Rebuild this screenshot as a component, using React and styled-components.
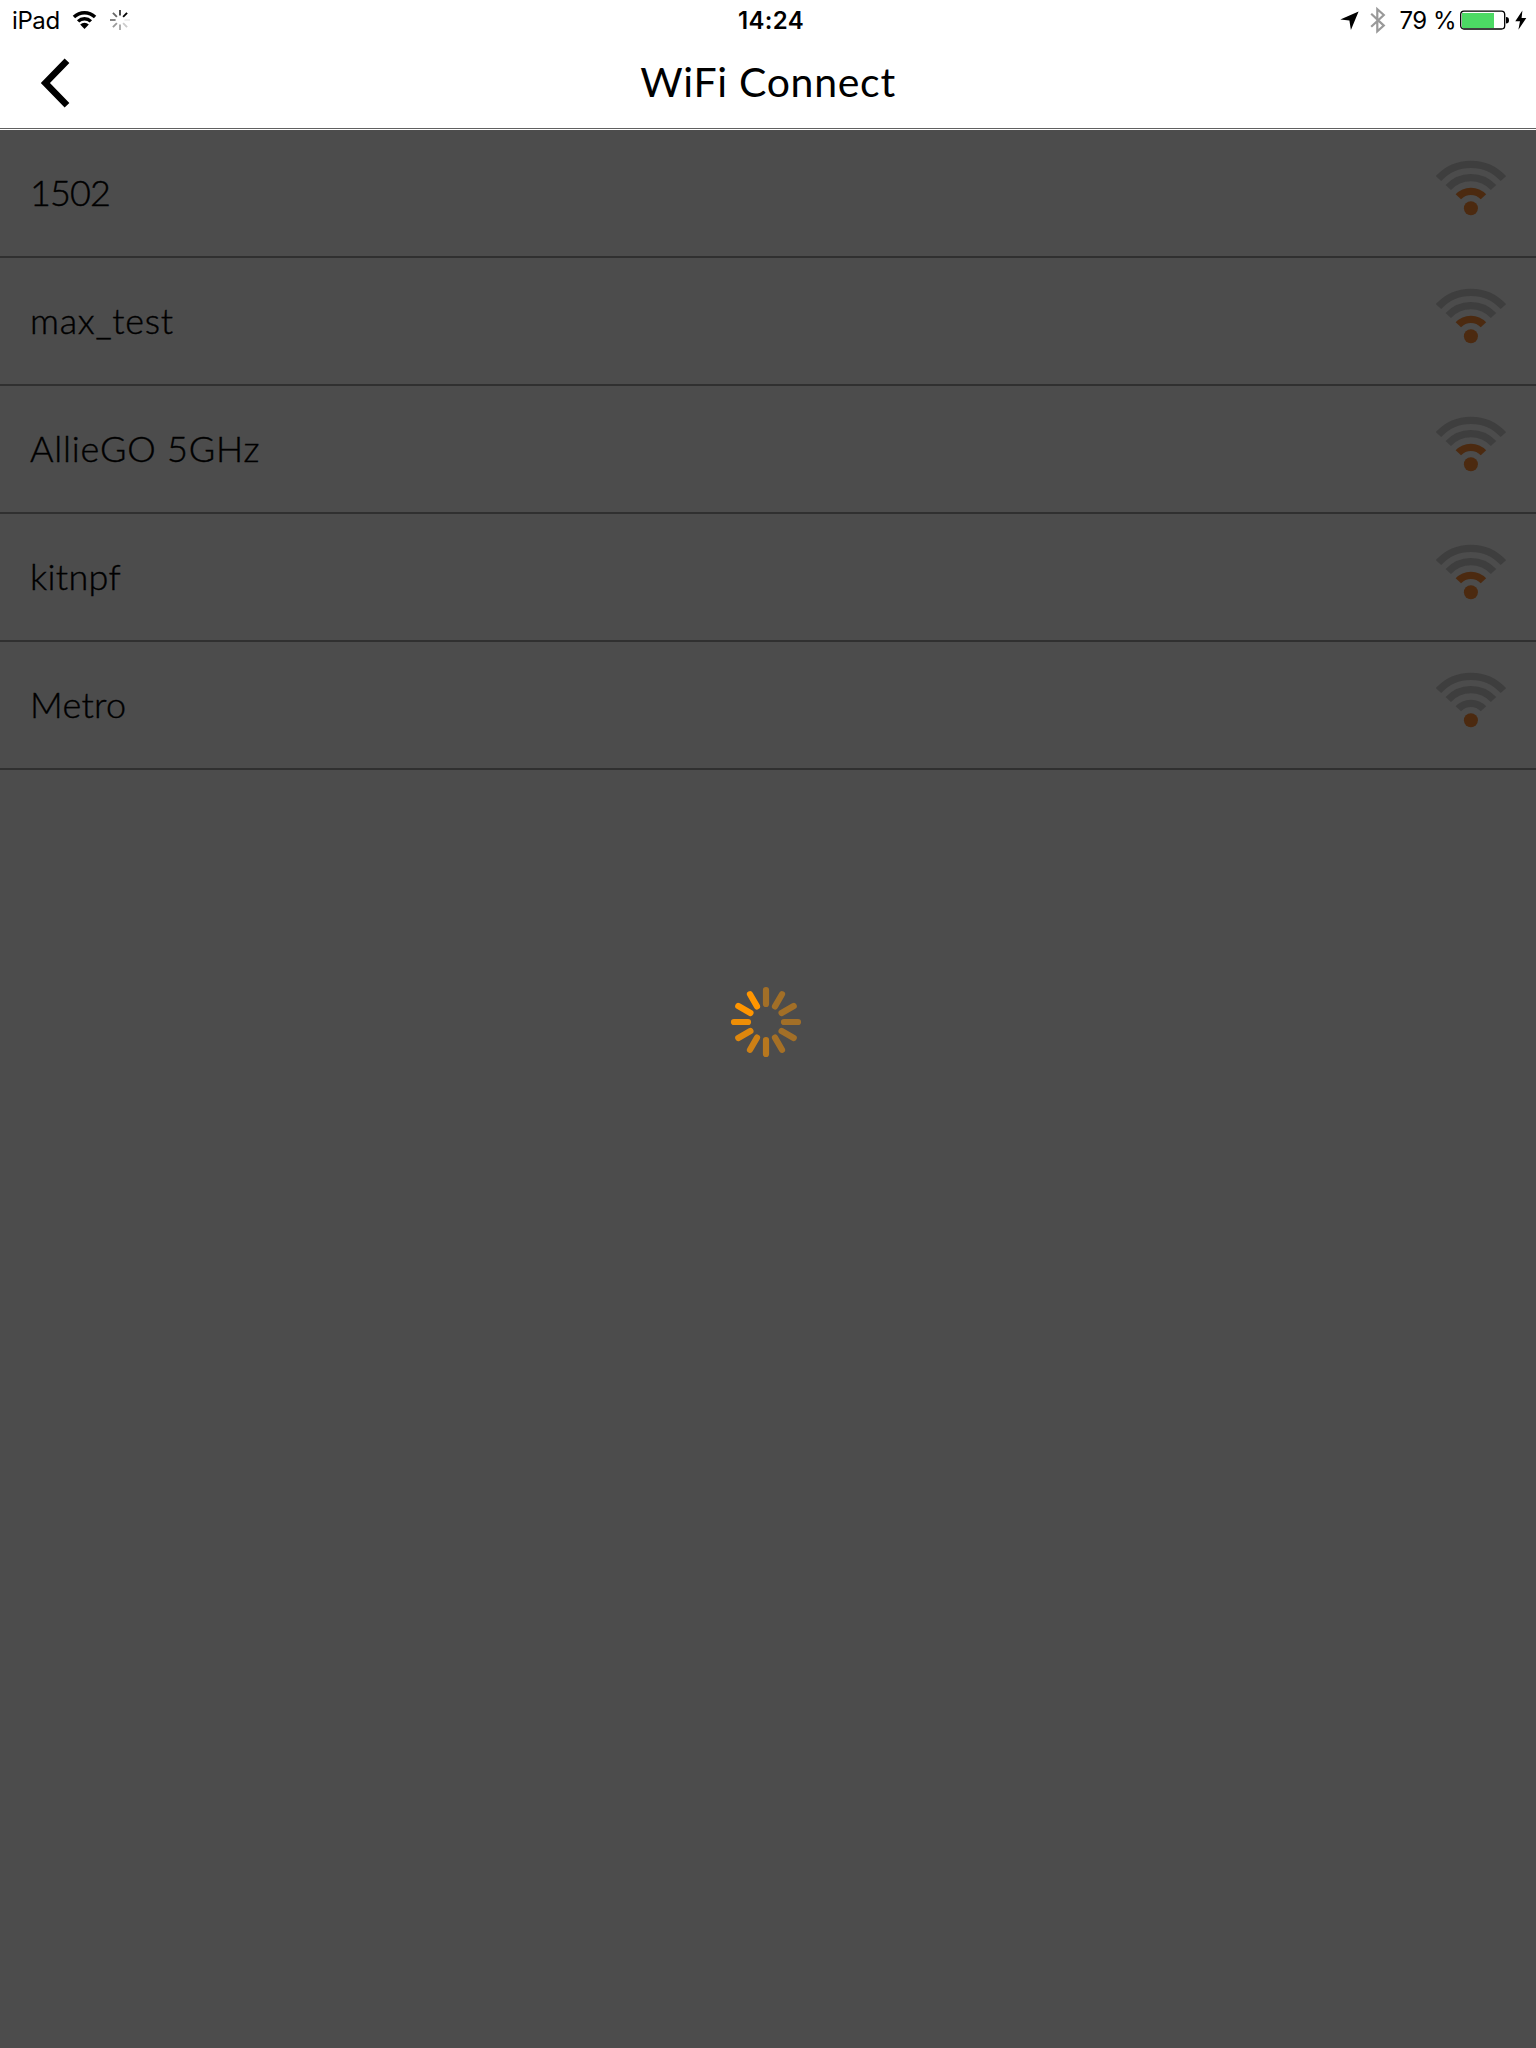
import React from "react";
import styled, { createGlobalStyle } from "styled-components";

const GlobalStyle = createGlobalStyle`
  *, *::before, *::after { box-sizing: border-box; }
  html, body { margin: 0; padding: 0; background: #4c4c4c; }
`;

const Screen = styled.div`
  position: relative;
  display: flex;
  flex-direction: column;
  width: 1536px;
  height: 2048px;
  overflow: hidden;
  background: #4c4c4c;
  color: #000;
  font-family: Lato, "Open Sans", sans-serif;
`;

const StatusBar = styled.div`
  display: grid;
  grid-template-columns: 1fr auto 1fr;
  align-items: center;
  height: 40px;
  padding: 0 9px 0 12px;
  background: #fff;
  font-family: Inter, Roboto, sans-serif;
  font-size: 24px;
  line-height: 36px;
`;

const StatusGroup = styled.div`
  display: flex;
  align-items: center;
  justify-content: ${(p) => (p.$end ? "flex-end" : "flex-start")};
  height: 40px;
`;

const StatusText = styled.span`
  padding-top: 2px;
  font-weight: ${(p) => p.$weight || 400};
  letter-spacing: ${(p) => p.$spacing || 0}px;
  margin-left: ${(p) => p.$lead || 0}px;
  margin-right: ${(p) => p.$gap || 0}px;
  white-space: nowrap;
`;

const StatusIcon = styled.svg`
  display: block;
  flex: none;
  margin-right: ${(p) => p.$gap || 0}px;
`;

const NavBar = styled.header`
  display: grid;
  grid-template-columns: 1fr auto 1fr;
  align-items: center;
  height: 90px;
  padding: 0 0 6px 40px;
  background: #fff;
  box-shadow: inset 0 -1px 0 #fff, inset 0 -2px 0 #606060;
`;

const BackButton = styled.button`
  display: block;
  width: 32px;
  height: 52px;
  margin-top: 2px;
  padding: 0;
  border: 0;
  background: none;
`;

const Title = styled.h1`
  margin: 0 20px 0 -20px;
  font-size: 41px;
  font-weight: 400;
  line-height: 50px;
  letter-spacing: 0.7px;
  white-space: nowrap;
`;

const NetworkList = styled.ul`
  margin: 0;
  padding: 0;
  list-style: none;
`;

const NetworkRow = styled.li`
  display: flex;
  align-items: center;
  justify-content: space-between;
  height: 128px;
  padding: 0 30px;
  border-bottom: 2px solid #303030;
`;

const NetworkName = styled.span`
  padding-bottom: 2px;
  font-size: 36px;
  font-weight: 300;
  line-height: 44px;
  letter-spacing: ${(p) => p.$spacing}px;
  -webkit-text-stroke: 0.4px #000;
`;

const SignalSvg = styled.svg`
  display: block;
  width: 70px;
  height: 58px;
  margin-bottom: 8px;
`;

const LoadingOverlay = styled.div`
  position: absolute;
  inset: 130px 0 0 0;
  display: flex;
  justify-content: center;
  padding: 856px 4px 0 0;
`;

const networks = [
  { name: "1502", strength: 1, spacing: -0.9 },
  { name: "max_test", strength: 1, spacing: 0.7 },
  { name: "AllieGO 5GHz", strength: 1, spacing: 0.8 },
  { name: "kitnpf", strength: 1, spacing: 0.3 },
  { name: "Metro", strength: 0, spacing: 0.3 },
];

const arcPath = (cx, cy, r, degrees) => {
  const a = (degrees * Math.PI) / 180;
  const dx = r * Math.cos(a);
  const y = cy - r * Math.sin(a);
  return `M${cx - dx} ${y}A${r} ${r} 0 0 1 ${cx + dx} ${y}`;
};

function Signal({ strength }) {
  return (
    <SignalSvg viewBox="0 0 70 58" fill="none" strokeWidth="7.3">
      {[17, 30.7, 44].map((r, i) => (
        <path
          key={r}
          d={arcPath(34.9, 48.3, r, 42.5)}
          stroke={i < strength ? "#4c2a10" : "#3e3e3e"}
        />
      ))}
      <circle cx="34.9" cy="48.3" r="7" fill="#4c2a10" />
    </SignalSvg>
  );
}

function Spinner() {
  const opacities = [0.48, 0.48, 0.48, 0.48, 0.48, 0.5, 0.6, 0.72, 0.82, 0.91, 1, 1];
  return (
    <svg width="72" height="72" viewBox="-36 -36 72 72" stroke="#ff9500" strokeWidth="6.2" strokeLinecap="round">
      {opacities.map((opacity, i) => (
        <line key={i} y1="-18" y2="-32" opacity={opacity} transform={`rotate(${i * 30})`} />
      ))}
    </svg>
  );
}

function ActivityIcon() {
  const shades = ["#444", "#000", "#eee", "#ccc", "#aaa", "#999", "#808080", "#666"];
  return (
    <StatusIcon width="22" height="22" viewBox="-11 -11 22 22" strokeWidth="1.9">
      {shades.map((shade, i) => (
        <line key={i} y1="-4.4" y2="-10" stroke={shade} transform={`rotate(${i * 45})`} />
      ))}
    </StatusIcon>
  );
}

export default function App() {
  return (
    <Screen>
      <GlobalStyle />
      <StatusBar>
        <StatusGroup>
          <StatusText $spacing={-0.4} $gap={12}>iPad</StatusText>
          <StatusIcon width="25" height="20" viewBox="0 0 25 20" fill="none" stroke="#000" strokeWidth="3.4" $gap={12}>
            <path d={arcPath(12.5, 18, 15.2, 46)} />
            <path d={arcPath(12.5, 18, 9.2, 46)} />
            <path d="M12.5 19L8.2 14.6A6.1 6.1 0 0 1 16.8 14.6Z" fill="#000" stroke="none" />
          </StatusIcon>
          <ActivityIcon />
        </StatusGroup>
        <StatusText $weight={600} $spacing={0.3} $lead={3}>14:24</StatusText>
        <StatusGroup $end>
          <StatusIcon width="19" height="20" viewBox="0 0 19 20" $gap={11}>
            <path d="M0.3 9.4L18.6 1.6L10.9 20L9.4 10.4Z" />
          </StatusIcon>
          <StatusIcon width="16" height="28" viewBox="0 0 16 28" fill="none" stroke="#999" strokeWidth="2.2" $gap={13}>
            <path d="M1.2 7.8L13.8 19.6L7.3 25.4V3.2L13.8 9L1.2 20.8" />
          </StatusIcon>
          <StatusText $spacing={-0.5} $gap={4}>79 %</StatusText>
          <StatusIcon width="50" height="20" viewBox="0 0 50 20" $gap={5}>
            <rect x="0.7" y="1.2" width="44" height="17.8" rx="3.2" fill="#fff" stroke="#000" strokeWidth="1.3" />
            <rect x="2" y="3" width="32" height="15" fill="#4cd964" />
            <path d="M46 7Q49 7 49 10.2Q49 13.5 46 13.5Z" />
          </StatusIcon>
          <StatusIcon width="12" height="20" viewBox="0 0 12 20">
            <path d="M7.4 0.4L0.3 11.3H5L3.4 19.8L11.3 8H6.6Z" />
          </StatusIcon>
        </StatusGroup>
      </StatusBar>
      <NavBar>
        <BackButton aria-label="Back">
          <svg width="32" height="52" viewBox="0 0 32 52" fill="none" stroke="#000" strokeWidth="6.6">
            <path d="M27 3.7L5.4 26L27 48.3" />
          </svg>
        </BackButton>
        <Title>WiFi Connect</Title>
      </NavBar>
      <NetworkList>
        {networks.map((network) => (
          <NetworkRow key={network.name}>
            <NetworkName $spacing={network.spacing}>{network.name}</NetworkName>
            <Signal strength={network.strength} />
          </NetworkRow>
        ))}
      </NetworkList>
      <LoadingOverlay>
        <Spinner />
      </LoadingOverlay>
    </Screen>
  );
}
